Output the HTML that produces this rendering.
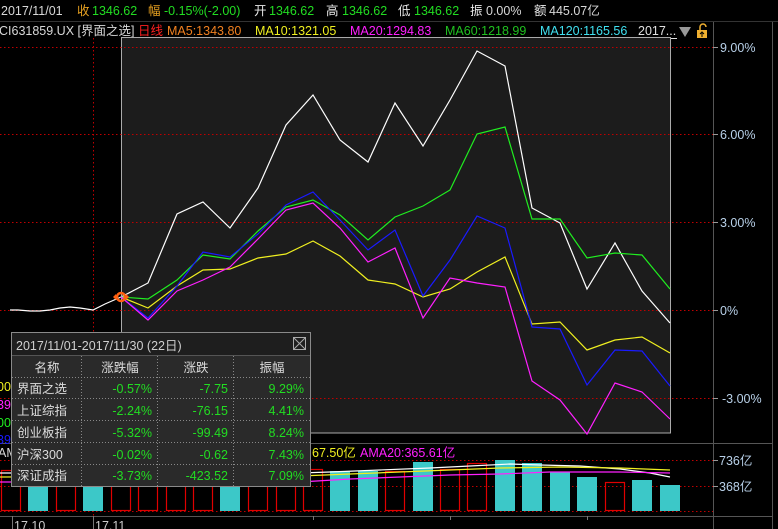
<!DOCTYPE html>
<html><head><meta charset="utf-8"><style>
html,body{margin:0;padding:0;background:#000;width:778px;height:529px;overflow:hidden}
svg{display:block}
text{font-family:"Liberation Sans","Noto Sans CJK SC",sans-serif}
</style></head><body>
<svg width="778" height="529" viewBox="0 0 778 529" xmlns="http://www.w3.org/2000/svg">
<rect width="778" height="529" fill="#000"/>
<!-- top info -->
<g font-size="12.5">
<text x="1" y="15" fill="#d8d8d8">2017/11/01</text>
<text x="77" y="15" fill="#e6a020">收</text><text x="92" y="15" fill="#22dd22">1346.62</text>
<text x="148" y="15" fill="#e6a020">幅</text><text x="164" y="15" fill="#22dd22">-0.15%(-2.00)</text>
<text x="254" y="15" fill="#e8e8e8">开</text><text x="269" y="15" fill="#22dd22">1346.62</text>
<text x="326" y="15" fill="#e8e8e8">高</text><text x="342" y="15" fill="#22dd22">1346.62</text>
<text x="398" y="15" fill="#e8e8e8">低</text><text x="414" y="15" fill="#22dd22">1346.62</text>
<text x="470" y="15" fill="#e8e8e8">振</text><text x="486" y="15" fill="#d8d8d8">0.00%</text>
<text x="534" y="15" fill="#e8e8e8">额</text><text x="549" y="15" fill="#d8d8d8">445.07亿</text>
</g>
<line x1="0" y1="21.5" x2="778" y2="21.5" stroke="#333"/>
<g font-size="12.5">
<text x="-1" y="35" fill="#d8d8d8">CI631859.UX [界面之选]</text>
<text x="138" y="35" fill="#ff2020">日线</text>
<text x="167" y="35" fill="#f08020">MA5:1343.80</text>
<text x="255" y="35" fill="#f0f020">MA10:1321.05</text>
<text x="350" y="35" fill="#ff20ff">MA20:1294.83</text>
<text x="445" y="35" fill="#20c020">MA60:1218.99</text>
<text x="540" y="35" fill="#40e0f0">MA120:1165.56</text>
<text x="638" y="35" fill="#e0e0e0">2017...</text>
</g>
<line x1="638" y1="38.5" x2="677" y2="38.5" stroke="#e0e0e0"/>
<polygon points="679,27 691,27 685,37" fill="#999"/>
<rect x="697" y="30" width="10" height="8" fill="#f0b030"/>
<path d="M700,30 v-3 a3,3 0 0 1 6,0" stroke="#f0b030" fill="none" stroke-width="1.5"/>
<path d="M702,37 v-4 M700,34 l2,-2 l2,2" stroke="#000" fill="none"/>
<!-- axes -->
<line x1="713.5" y1="22" x2="713.5" y2="529" stroke="#555"/>
<line x1="772.5" y1="22" x2="772.5" y2="529" stroke="#555"/>
<line x1="0" y1="443.5" x2="773" y2="443.5" stroke="#555"/>
<line x1="0" y1="516.5" x2="773" y2="516.5" stroke="#555"/>
<!-- selection -->
<rect x="121.5" y="37.5" width="549" height="395.5" fill="#1c1c1c" stroke="#aaa"/>
<g stroke="#c00000" stroke-dasharray="1.5,2.5" stroke-width="1">
<line x1="0" y1="47.5" x2="713" y2="47.5"/>
<line x1="0" y1="134.5" x2="713" y2="134.5"/>
<line x1="0" y1="222.5" x2="713" y2="222.5"/>
<line x1="0" y1="310.5" x2="713" y2="310.5"/>
<line x1="0" y1="398.5" x2="713" y2="398.5"/>
<line x1="93.5" y1="38" x2="93.5" y2="516"/>
<line x1="0" y1="460.5" x2="713" y2="460.5"/>
<line x1="0" y1="486.5" x2="713" y2="486.5"/>
<line x1="0" y1="511.5" x2="713" y2="511.5"/>
</g>
<g stroke="#999"><line x1="713" y1="47.5" x2="718" y2="47.5"/><line x1="713" y1="134.5" x2="718" y2="134.5"/><line x1="713" y1="222.5" x2="718" y2="222.5"/><line x1="713" y1="310.5" x2="718" y2="310.5"/><line x1="713" y1="398.5" x2="718" y2="398.5"/><line x1="713" y1="460.5" x2="718" y2="460.5"/><line x1="713" y1="486.5" x2="718" y2="486.5"/></g>
<g font-size="12.5" fill="#b8d0e8">
<text x="720" y="52">9.00%</text><text x="720" y="139">6.00%</text><text x="720" y="227">3.00%</text><text x="720" y="315">0%</text><text x="722" y="403">-3.00%</text>
<text x="719" y="465">736亿</text><text x="719" y="491">368亿</text>
</g>
<!-- lines -->
<g fill="none" stroke-width="1.2">
<polyline stroke="#fff" points="10,310 18,310 30,311 40,311 50,310 60,308 70,307 80,308 93,310 105,304 121,297 148,283 177,214 203,202 230,228 258,188 286,125 313,95 340,140 368,162 395,103 423,146 450,100 477,51 505,66 532,208 560,223 587,289 615,243 642,291 670,323"/>
<polyline stroke="#20ee20" points="121,297 148,299 177,280 203,255 230,259 258,231 286,207 313,200 340,215 368,240 395,217 423,206 450,190 477,134 505,127 532,219 560,219 587,258 615,253 642,255 670,289"/>
<polyline stroke="#f0f020" points="121,297 148,308 177,286 203,270 230,269 258,258 286,254 313,241 340,256 368,280 395,284 423,297 450,289 477,272 505,257 532,324 560,322 587,350 615,340 642,337 670,353"/>
<polyline stroke="#1a1aff" points="121,297 148,318 177,286 203,252 230,257 258,234 286,205 313,192 340,220 368,250 395,230 423,296 450,260 477,216 505,228 532,327 560,329 587,385 615,350 642,351 670,386"/>
<polyline stroke="#ff20ff" points="121,297 148,320 177,291 203,280 230,267 258,239 286,210 313,203 340,228 368,262 395,248 423,318 450,278 477,283 505,287 532,381 560,400 587,434 615,383 642,392 670,419"/>
</g>
<circle cx="121" cy="297" r="4" fill="none" stroke="#ff6010" stroke-width="2.5"/>
<polygon points="113,297 116,294 116,300" fill="#ff6010"/><polygon points="129,297 126,294 126,300" fill="#ff6010"/>
<!-- volume bars -->
<g stroke="#e00000" fill="none" stroke-width="1.2">
<rect x="1.5" y="470.5" width="19" height="40"/><rect x="56.5" y="470.5" width="19" height="40"/><rect x="111.5" y="470.5" width="19" height="40"/><rect x="138.5" y="470.5" width="19" height="40"/><rect x="166.5" y="470.5" width="19" height="40"/><rect x="193.5" y="470.5" width="19" height="40"/><rect x="248.5" y="470.5" width="19" height="40"/><rect x="276.5" y="470.5" width="19" height="40"/>
<rect x="303.5" y="469.5" width="19" height="41"/><rect x="385.5" y="471.5" width="19" height="39"/><rect x="440.5" y="469.5" width="19" height="41"/><rect x="467.5" y="463.5" width="19" height="47"/><rect x="605.5" y="482.5" width="19" height="28"/>
</g>
<g fill="#3cc8c8">
<rect x="28" y="470" width="20" height="41"/><rect x="83" y="470" width="20" height="41"/><rect x="220" y="470" width="20" height="41"/>
<rect x="330" y="471" width="20" height="40"/><rect x="358" y="471" width="20" height="40"/><rect x="413" y="462" width="20" height="49"/><rect x="495" y="460" width="20" height="51"/><rect x="522" y="463" width="20" height="48"/><rect x="550" y="472" width="20" height="39"/><rect x="577" y="477" width="20" height="34"/><rect x="632" y="480" width="20" height="31"/><rect x="660" y="485" width="20" height="26"/>
</g>
<g fill="none" stroke-width="1.2">
<polyline stroke="#fff" points="0,473 300,473 330,472 380,470 430,468 470,466 510,464 540,465 580,466 620,469 650,473 670,477"/>
<polyline stroke="#f0f020" points="0,477 300,476 350,474 400,472 450,470 500,468 560,467 620,468 670,470"/>
<polyline stroke="#ff20ff" points="0,482 300,482 350,479 400,477 450,475 500,474 550,472 620,472 670,473"/>
</g>
<g font-size="12.5">
<text x="-2" y="457" fill="#d8d8d8">AM</text>
<text x="312" y="457" fill="#f0f020">67.50亿</text>
<text x="360" y="457" fill="#ff20ff">AMA20:365.61亿</text>
<text x="-3" y="391" fill="#f0f020">00</text><text x="-3" y="409" fill="#ff20ff">39</text>
<text x="-3" y="427" fill="#20ee20">00</text><text x="-3" y="444" fill="#1a1aff">39</text>
</g>
<!-- x axis -->
<g stroke="#777"><line x1="12.5" y1="516" x2="12.5" y2="529"/><line x1="93.5" y1="516" x2="93.5" y2="529"/><line x1="313.5" y1="516" x2="313.5" y2="520"/><line x1="450.5" y1="516" x2="450.5" y2="520"/><line x1="587.5" y1="516" x2="587.5" y2="520"/></g>
<text x="14" y="530" font-size="12.5" fill="#ccc">17.10</text>
<text x="95" y="530" font-size="12.5" fill="#ccc">17.11</text>
<!-- panel -->
<rect x="11.5" y="332.5" width="299" height="154" fill="#2a2a2a" stroke="#8a8a8a"/>
<rect x="12" y="333" width="298" height="22" fill="#1e1e1e"/>
<line x1="12" y1="355.5" x2="310" y2="355.5" stroke="#555"/>
<text x="16" y="350" font-size="12.5" fill="#cfcfcf">2017/11/01-2017/11/30 (22日)</text>
<rect x="293.5" y="337.5" width="12" height="12" fill="none" stroke="#aaa"/>
<path d="M294,338 L305,349 M305,338 L294,349" stroke="#aaa"/>
<g stroke="#888" stroke-dasharray="1,2">
<line x1="12" y1="377.5" x2="310" y2="377.5"/><line x1="12" y1="398.5" x2="310" y2="398.5"/><line x1="12" y1="420.5" x2="310" y2="420.5"/><line x1="12" y1="442.5" x2="310" y2="442.5"/><line x1="12" y1="464.5" x2="310" y2="464.5"/>
<line x1="81.5" y1="356" x2="81.5" y2="486"/><line x1="157.5" y1="356" x2="157.5" y2="486"/><line x1="233.5" y1="356" x2="233.5" y2="486"/>
</g>
<g font-size="12.5" fill="#dcdcdc" text-anchor="middle">
<text x="47" y="372">名称</text><text x="120" y="372">涨跌幅</text><text x="196" y="372">涨跌</text><text x="272" y="372">振幅</text>
</g>
<g font-size="12.5" fill="#dcdcdc">
<text x="17" y="393">界面之选</text><text x="17" y="415">上证综指</text><text x="17" y="437">创业板指</text><text x="17" y="459">沪深300</text><text x="17" y="480">深证成指</text>
</g>
<g font-size="12.5" fill="#22dd22" text-anchor="end">
<text x="152" y="393">-0.57%</text><text x="228" y="393">-7.75</text><text x="304" y="393">9.29%</text>
<text x="152" y="415">-2.24%</text><text x="228" y="415">-76.15</text><text x="304" y="415">4.41%</text>
<text x="152" y="437">-5.32%</text><text x="228" y="437">-99.49</text><text x="304" y="437">8.24%</text>
<text x="152" y="459">-0.02%</text><text x="228" y="459">-0.62</text><text x="304" y="459">7.43%</text>
<text x="152" y="480">-3.73%</text><text x="228" y="480">-423.52</text><text x="304" y="480">7.09%</text>
</g>
</svg>
</body></html>
